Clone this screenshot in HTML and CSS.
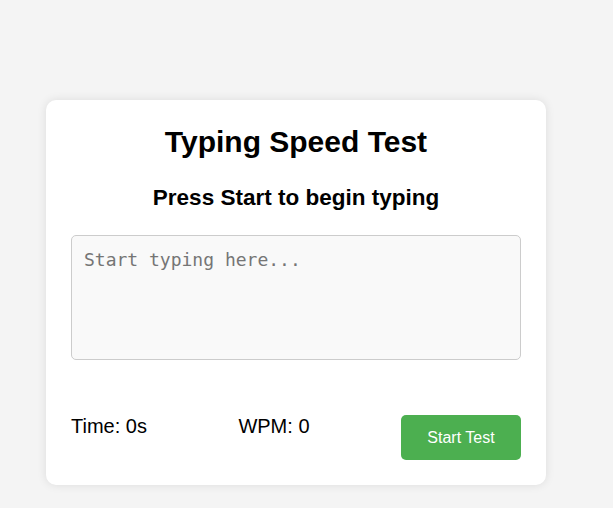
FILE: index.html
```html
<!DOCTYPE html>
<html lang="en">
<head>
<meta charset="UTF-8">
<title>Typing Speed Test</title>
<link rel="stylesheet" href="styles.css">
</head>
<body>
  <div class="card">
    <h1 class="title">Typing Speed Test</h1>
    <h2 class="prompt">Press Start to begin typing</h2>
    <textarea class="input" placeholder="Start typing here..."></textarea>
    <div class="stats">
      <div class="stat">Time: 0s</div>
      <div class="stat">WPM: 0</div>
      <button class="start-btn">Start Test</button>
    </div>
  </div>
</body>
</html>
```

FILE: styles.css
```css
html, body {
  margin: 0;
  padding: 0;
}
body {
  background: #f4f4f4;
  font-family: "Liberation Sans", Arial, sans-serif;
  color: #000;
  padding: 100px 0 0 46px;
  height: 508px;
  box-sizing: border-box;
}
.card {
  width: 500px;
  box-sizing: border-box;
  background: #fff;
  border-radius: 10px;
  box-shadow: 0 0 10px rgba(0, 0, 0, 0.1);
  padding: 25px;
  display: flex;
  flex-direction: column;
}
.title {
  margin: 0;
  font-size: 30px;
  font-weight: bold;
  text-align: center;
}
.prompt {
  margin: 26px 0 0;
  font-size: 22.5px;
  font-weight: bold;
  text-align: center;
}
.input {
  margin-top: 24px;
  width: 100%;
  height: 125px;
  box-sizing: border-box;
  padding: 13px 12px 12px;
  border: 1px solid #ccc;
  border-radius: 5px;
  background: #f9f9f9;
  font-family: "DejaVu Sans Mono", monospace;
  font-size: 18px;
  resize: none;
  outline: none;
}
.input::placeholder {
  color: #757575;
}
.stats {
  margin-top: 55px;
  display: flex;
  justify-content: space-between;
  align-items: flex-start;
}
.stat {
  font-size: 20px;
}
.start-btn {
  width: 120px;
  height: 45px;
  background: #4caf50;
  color: #fff;
  border: none;
  border-radius: 5px;
  font-family: "Liberation Sans", Arial, sans-serif;
  font-size: 16px;
  cursor: pointer;
}
```
